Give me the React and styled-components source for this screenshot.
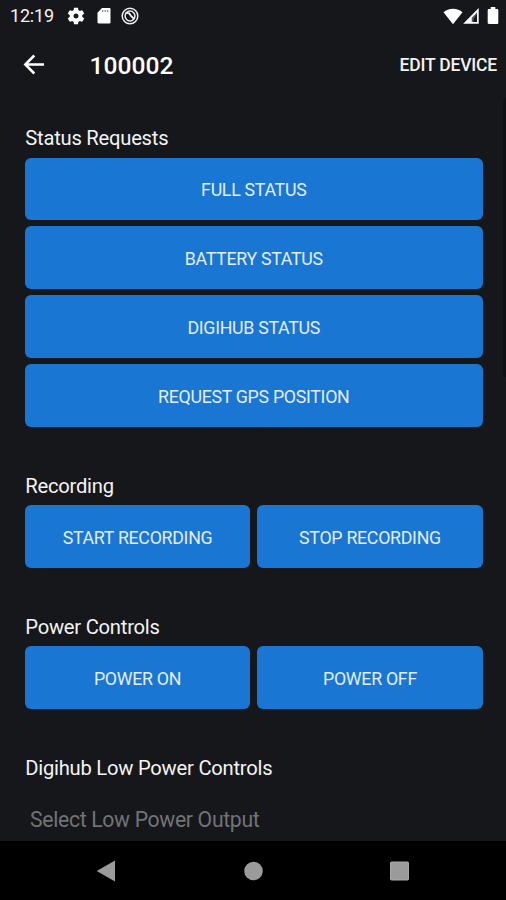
import React from 'react';
import styled, { createGlobalStyle } from 'styled-components';

const statusRequests = ['FULL STATUS', 'BATTERY STATUS', 'DIGIHUB STATUS', 'REQUEST GPS POSITION'];

const SettingsIcon = () => (
  <svg width="20" height="20" viewBox="0 0 24 24" fill="#fff">
    <path fillRule="evenodd" d="M19.43 12.98c.04-.32.07-.64.07-.98s-.03-.66-.07-.98l2.11-1.65c.19-.15.24-.42.12-.64l-2-3.46c-.12-.22-.39-.3-.61-.22l-2.49 1c-.52-.4-1.08-.73-1.69-.98l-.38-2.65C14.46 2.18 14.25 2 14 2h-4c-.25 0-.46.18-.49.42l-.38 2.65c-.61.25-1.17.59-1.69.98l-2.49-1c-.23-.09-.49 0-.61.22l-2 3.46c-.13.22-.07.49.12.64l2.11 1.65c-.04.32-.07.65-.07.98s.03.66.07.98l-2.11 1.65c-.19.15-.24.42-.12.64l2 3.46c.12.22.39.3.61.22l2.49-1c.52.4 1.08.73 1.69.98l.38 2.65c.03.24.24.42.49.42h4c.25 0 .46-.18.49-.42l.38-2.65c.61-.25 1.17-.59 1.69-.98l2.49 1c.23.09.49 0 .61-.22l2-3.46c.12-.22.07-.49-.12-.64l-2.11-1.65zM12 15c-1.66 0-3-1.34-3-3s1.34-3 3-3 3 1.34 3 3-1.34 3-3 3z" />
  </svg>
);

const SdCardIcon = () => (
  <svg width="14" height="16" viewBox="0 0 14 16">
    <path fill="#fff" d="M5 0h7.3c.8 0 1.2.5 1.2 1.2v13.1c0 .8-.5 1.2-1.2 1.2H1.7C1 15.5.5 15 .5 14.3V4.7z" />
    <path stroke="#77787a" strokeWidth="1.1" d="M5.7 2v2M8.2 2v2M10.7 2v2" />
  </svg>
);

const DebugIcon = () => (
  <svg width="18" height="18" viewBox="0 0 18 18" fill="none" stroke="#eee">
    <circle cx="9" cy="9" r="7.8" strokeWidth="1.5" />
    <circle cx="9" cy="9" r="4.9" strokeWidth="1.5" />
    <path strokeWidth="1.9" d="M4.6 5.6l3.6.8 2 2.8 3.2 3" />
  </svg>
);

const WifiIcon = () => (
  <svg width="20" height="17" viewBox="0 0 20 17" fill="#fff">
    <path d="M10 16.3L.5 4.3C3 1.9 6.2.7 10 .7s7 1.2 9.500 3.600z" />
  </svg>
);

const SignalIcon = () => (
  <svg width="16" height="16" viewBox="0 0 16 16">
    <path fill="#fff" fillRule="evenodd" d="M15.7 0v15.7H.2zM14 4.5L8.8 9.8V14H14z" />
    <path fill="#fff" d="M8.8 9.8L14 4.5V6l-3.5 5v3H8.8z" opacity=".3" />
  </svg>
);

const BatteryIcon = () => (
  <svg width="12" height="18" viewBox="0 0 12 18" fill="#fff">
    <path d="M3.7 0h4.6v2h1.8c.8 0 1.2.5 1.2 1.2v12.6c0 .8-.5 1.2-1.2 1.2H1.9C1.2 17 .7 16.5.7 15.8V3.2C.7 2.500 1.200 2 1.900 2h1.800z" />
  </svg>
);

const BackIcon = () => (
  <svg width="22" height="22" viewBox="0 0 22 22" fill="none" stroke="#fff" strokeWidth="2.5">
    <path d="M21 10.500H3M11.300 1.500L2.300 10.500l9 9" />
  </svg>
);

const Section = ({ title, children }) => (
  <StyledSection>
    <StyledHeading>{title}</StyledHeading>
    {children}
  </StyledSection>
);

const App = () => {
  const requestsRender = statusRequests.map((label) => (
    <StyledButton key={label}>{label}</StyledButton>
  ));

  return (
    <StyledScreen>
      <GlobalStyle />

      {/* System status */}
      <StyledStatusBar>
        <StyledTime>12:19</StyledTime>
        <StyledNotifications>
          <SettingsIcon />
          <SdCardIcon />
          <DebugIcon />
        </StyledNotifications>
        <StyledSignals>
          <WifiIcon />
          <SignalIcon />
          <BatteryIcon />
        </StyledSignals>
      </StyledStatusBar>

      <StyledHeader>
        <StyledBack aria-label="Back"><BackIcon /></StyledBack>
        <StyledTitle>100002</StyledTitle>
        <StyledEdit>EDIT DEVICE</StyledEdit>
      </StyledHeader>

      {/* Scrolling content */}
      <StyledBody>
        <StyledContent>
          <Section title="Status Requests">
            <StyledButtons>{requestsRender}</StyledButtons>
          </Section>
          <Section title="Recording">
            <StyledButtons $columns={2}>
              <StyledButton>START RECORDING</StyledButton>
              <StyledButton>STOP RECORDING</StyledButton>
            </StyledButtons>
          </Section>
          <Section title="Power Controls">
            <StyledButtons $columns={2}>
              <StyledButton>POWER ON</StyledButton>
              <StyledButton>POWER OFF</StyledButton>
            </StyledButtons>
          </Section>
          <Section title="Digihub Low Power Controls">
            <StyledSelect>Select Low Power Output</StyledSelect>
          </Section>
        </StyledContent>
        <StyledScrollbar />
      </StyledBody>

      <StyledNavBar>
        <svg width="20" height="22" viewBox="0 0 20 22" fill="#9b9b9b">
          <path d="M19 .5v21L.7 11z" />
        </svg>
        <svg width="20" height="20" viewBox="0 0 20 20" fill="#9b9b9b">
          <circle cx="10.5" cy="10" r="9.3" />
        </svg>
        <svg width="20" height="20" viewBox="0 0 20 20">
          <rect x=".5" y="1" width="18" height="18" rx="1" fill="#9b9b9b" stroke="#aaa" />
        </svg>
      </StyledNavBar>
    </StyledScreen>
  );
};

const GlobalStyle = createGlobalStyle`
  * {
    box-sizing: border-box;
  }
  body {
    margin: 0;
    background: #16171b;
  }
  svg {
    display: block;
    flex: none;
  }
  button {
    padding: 0;
    border: none;
    background: none;
    color: inherit;
    font: inherit;
  }
`
const StyledScreen = styled.main`
  display: flex;
  flex-direction: column;
  width: 506px;
  height: 900px;
  overflow: hidden;
  background: #16171b;
  color: #f3f3f3;
  font-family: Roboto, sans-serif;
`
const StyledStatusBar = styled.div`
  display: flex;
  align-items: center;
  height: 32px;
  padding: 0 7px 0 10px;
`
const StyledTime = styled.span`
  width: 56px;
  font-size: 18px;
  letter-spacing: -0.2px;
  line-height: 32px;
  white-space: nowrap;
`
const StyledNotifications = styled.div`
  display: flex;
  align-items: center;
  gap: 10.5px;
`
const StyledSignals = styled.div`
  display: flex;
  align-items: center;
  margin-left: auto;
  > :last-child {
    margin-left: 8px;
  }
`
const StyledHeader = styled.header`
  display: flex;
  align-items: center;
  height: 66px;
  padding: 0 9px 0 23px;
`
const StyledBack = styled.button`
  width: 66.5px;
`
const StyledTitle = styled.h1`
  margin: 0;
  color: #fff;
  font-size: 24.6px;
  font-weight: 500;
`
const StyledEdit = styled.button`
  && {
    margin-left: auto;
    font-size: 17.5px;
    font-weight: 500;
    letter-spacing: -0.18px;
  }
`
const StyledBody = styled.div`
  display: flex;
  height: 743px;
  overflow: hidden;
`
const StyledContent = styled.div`
  flex: 1;
  padding: 27px 20.5px 0 25px;
`
const StyledSection = styled.section`
  margin-bottom: 46.2px;
`
const StyledHeading = styled.h2`
  margin: 0;
  height: 32.5px;
  font-size: 20.2px;
  font-weight: 400;
  letter-spacing: -0.24px;
  line-height: 26px;
  text-indent: 0.3px;
`
const StyledButtons = styled.div`
  display: grid;
  grid-template-columns: repeat(${props => props.$columns || 1}, 1fr);
  gap: 6.7px 7.4px;
`
const StyledButton = styled.button`
  && {
    height: 62.3px;
    padding-top: 1px;
    border-radius: 6px;
    background: #1976d2;
    color: #e4edfb;
    font-size: 17.8px;
    letter-spacing: -0.3px;
    text-align: center;
  }
`
const StyledSelect = styled.div`
  padding: 19.5px 5px 0;
  color: #727375;
  font-size: 21.2px;
  letter-spacing: -0.32px;
  line-height: 26px;
`
const StyledScrollbar = styled.div`
  width: 3px;
  height: 279px;
  background: #0f1013;
`
const StyledNavBar = styled.nav`
  display: flex;
  flex: 1;
  align-items: center;
  justify-content: space-between;
  padding: 0 96px;
  background: #000;
`

export default App;
